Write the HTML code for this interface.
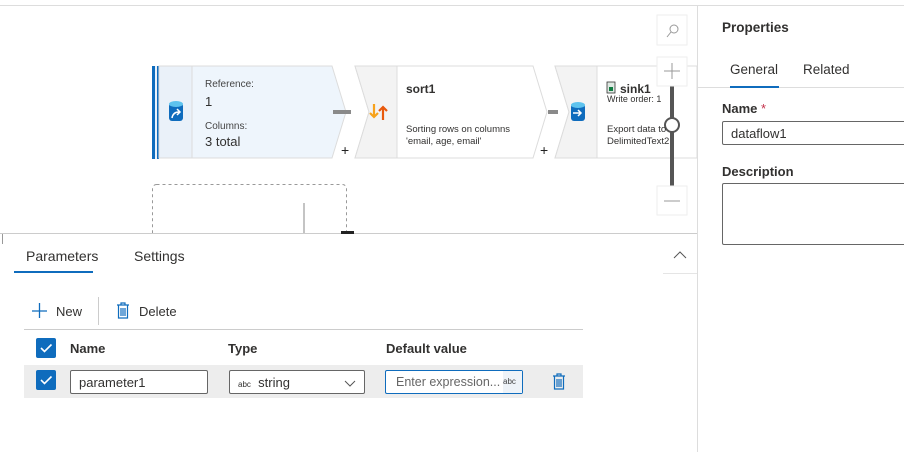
<!DOCTYPE html>
<html><head><meta charset="utf-8"><style>
*{box-sizing:border-box;margin:0;padding:0}
body{width:904px;height:452px;overflow:hidden;background:#fff;font-family:"Liberation Sans",sans-serif;color:#323130;position:relative}
.a{position:absolute}
.t{position:absolute;white-space:nowrap}
</style></head><body>
<div class="a" style="left:0;top:5px;width:904px;height:1px;background:#ddd"></div>
<svg class="a" style="left:0;top:0" width="697" height="234">
 <!-- node1 -->
 <rect x="152" y="66" width="3" height="93" fill="#0f6cbd"/>
 <rect x="155" y="66" width="2" height="93" fill="#eaf2fb"/>
 <rect x="157" y="66" width="2" height="93" fill="#0f6cbd"/>
 <polygon points="159,66 332,66 346,112 332,158 159,158" fill="#eef5fc" stroke="#dcdcdc"/>
 <rect x="159" y="66" width="33" height="92" fill="#eaf1f9" stroke="#dcdcdc"/>
 <rect x="169" y="103" width="14" height="18" rx="3" fill="#0f6cbd"/>
 <ellipse cx="176" cy="104" rx="7" ry="3" fill="#5ec3ee"/>
 <path d="M172 118 q1-6 7-6 M177 109 l3 3 -3 3" stroke="#fff" stroke-width="1.5" fill="none"/>
 <rect x="333" y="110" width="18" height="4" fill="#8a8a8a"/>
 <!-- node2 -->
 <polygon points="355,66 533,66 547,112 533,158 369,158 369,158 355,158 369,112" fill="#fff" stroke="#dcdcdc"/>
 <polygon points="355,66 397,66 397,158 369,158 355,158 369,112" fill="#f3f3f3" stroke="#dcdcdc"/>
 <path d="M374 104 v13 M370 113 l4 4 4-4" stroke="#f7a21b" stroke-width="2.2" fill="none"/>
 <path d="M383 120 v-13 M379 111 l4-4 4 4" stroke="#e8590c" stroke-width="2.2" fill="none"/>
 <rect x="548" y="110" width="10" height="4" fill="#8a8a8a"/>
 <!-- node3 -->
 <polygon points="555,66 697,66 697,158 569,158 555,158 569,112" fill="#fff" stroke="#dcdcdc"/>
 <polygon points="555,66 597,66 597,158 555,158 569,112" fill="#f3f3f3" stroke="#dcdcdc"/>
 <rect x="571" y="104" width="14" height="17" rx="3" fill="#0f6cbd"/>
 <ellipse cx="578" cy="105" rx="7" ry="3" fill="#5ec3ee"/>
 <path d="M573 113 h8 M578 110 l3 3-3 3" stroke="#fff" stroke-width="1.5" fill="none"/>
 <rect x="607" y="82" width="8" height="11" fill="#dfe9e3" stroke="#333" stroke-width="0.8"/>
 <rect x="609" y="87" width="4" height="4" fill="#107c41"/>
 <text x="341" y="155" font-size="14" fill="#222">+</text>
 <text x="540" y="155" font-size="14" fill="#222">+</text>
 <!-- dashed -->
 <rect x="152.5" y="184.5" width="194" height="60" rx="4" fill="none" stroke="#999" stroke-dasharray="3,3"/>
 <line x1="304" y1="203" x2="304" y2="234" stroke="#888"/>
 <!-- zoom -->
 <rect x="657" y="15" width="30" height="30" fill="#fff" stroke="#eee"/>
 <circle cx="674" cy="29" r="4" fill="none" stroke="#999"/><line x1="671" y1="32" x2="667" y2="37" stroke="#999"/>
 <line x1="672" y1="86" x2="672" y2="186" stroke="#555" stroke-width="4"/>
 <rect x="657" y="57" width="30" height="29" fill="#fff" stroke="#eee"/>
 <path d="M664 71 h16 M672 63 v16" stroke="#999"/>
 <circle cx="672" cy="125" r="7" fill="#fff" stroke="#555" stroke-width="2"/>
 <rect x="657" y="186" width="30" height="29" fill="#fff" stroke="#eee"/>
 <path d="M664 201 h16" stroke="#999"/>
</svg>
<div class="t" style="left:205px;top:79px;font-size:10px;color:#444">Reference:</div>
<div class="t" style="left:205px;top:94px;font-size:13px">1</div>
<div class="t" style="left:205px;top:121px;font-size:10px;color:#444">Columns:</div>
<div class="t" style="left:205px;top:134px;font-size:13px">3 total</div>
<div class="t" style="left:406px;top:82px;font-size:12px;font-weight:bold">sort1</div>
<div class="t" style="left:406px;top:124px;font-size:9.5px;line-height:12px">Sorting rows on columns<br>'email, age, email'</div>
<div class="t" style="left:620px;top:82px;font-size:12px;font-weight:bold">sink1</div>
<div class="t" style="left:607px;top:94px;font-size:9px">Write order: 1</div>
<div class="t" style="left:607px;top:124px;font-size:9.5px;line-height:12px;width:64px;overflow:hidden">Export data to<br>DelimitedText2</div>
<!-- bottom panel -->
<div class="a" style="left:0;top:233px;width:697px;height:1px;background:#ccc"></div>
<div class="a" style="left:341px;top:231px;width:13px;height:3px;background:#222"></div>
<div class="a" style="left:0;top:234px;width:697px;height:218px;background:#fff"></div>
<div class="a" style="left:2px;top:234px;width:1px;height:10px;background:#999"></div>
<div class="t" style="left:26px;top:248px;font-size:14px">Parameters</div>
<div class="t" style="left:134px;top:248px;font-size:14px">Settings</div>
<div class="a" style="left:14px;top:271px;width:79px;height:2px;background:#0f6cbd"></div>
<svg class="a" style="left:672px;top:250px" width="16" height="10"><path d="M2 8 l6-6 6 6" stroke="#555" fill="none"/></svg>
<div class="a" style="left:663px;top:273px;width:34px;height:1px;background:#e5e5e5"></div>
<svg class="a" style="left:32px;top:303px" width="16" height="16"><path d="M0 8 h15 M7.5 0 v15" stroke="#0f6cbd" stroke-width="1.3"/></svg>
<div class="t" style="left:56px;top:304px;font-size:13px">New</div>
<div class="a" style="left:98px;top:297px;width:1px;height:28px;background:#ccc"></div>
<svg class="a" style="left:116px;top:302px" width="14" height="17"><path d="M1 3 h12 M5 3 V1 h4 v2 M2.5 3 v13 h9 V3 M5 6 v8 M7 6 v8 M9 6 v8" stroke="#0f6cbd" fill="none" stroke-width="1.2"/></svg>
<div class="t" style="left:139px;top:304px;font-size:13px">Delete</div>
<div class="a" style="left:24px;top:329px;width:559px;height:1px;background:#ccc"></div>
<div class="a" style="left:36px;top:338px;width:20px;height:20px;background:#0f6cbd;border-radius:2px"></div>
<svg class="a" style="left:36px;top:338px" width="20" height="20"><path d="M5 10 l3.5 3.5 7-7" stroke="#fff" stroke-width="1.6" fill="none"/></svg>
<div class="t" style="left:70px;top:341px;font-size:13px;font-weight:bold">Name</div>
<div class="t" style="left:228px;top:341px;font-size:13px;font-weight:bold">Type</div>
<div class="t" style="left:386px;top:341px;font-size:13px;font-weight:bold">Default value</div>
<div class="a" style="left:24px;top:365px;width:559px;height:33px;background:#ededed"></div>
<div class="a" style="left:36px;top:370px;width:20px;height:20px;background:#0f6cbd;border-radius:2px"></div>
<svg class="a" style="left:36px;top:370px" width="20" height="20"><path d="M5 10 l3.5 3.5 7-7" stroke="#fff" stroke-width="1.6" fill="none"/></svg>
<div class="a" style="left:70px;top:370px;width:138px;height:24px;background:#fff;border:1px solid #666;border-radius:2px;font-size:13px;padding:4px 0 0 8px">parameter1</div>
<div class="a" style="left:229px;top:370px;width:136px;height:24px;background:#fff;border:1px solid #666;border-radius:2px;font-size:13px;padding:4px 0 0 8px"><span style="font-size:8px">abc</span>&nbsp; string</div>
<svg class="a" style="left:344px;top:380px" width="12" height="8"><path d="M1 1 l5 5 5-5" stroke="#555" fill="none"/></svg>
<div class="a" style="left:385px;top:370px;width:138px;height:24px;background:#fff;border:1px solid #0f6cbd;border-radius:2px;font-size:12.5px;padding:4px 0 0 10px;color:#666">Enter expression...</div>
<div class="a" style="left:503px;top:371px;width:19px;height:22px;background:#eef3f8;font-size:8px;padding-top:6px;color:#444">abc</div>
<svg class="a" style="left:552px;top:373px" width="14" height="18"><path d="M1 3 h12 M5 3 V1 h4 v2 M2.5 3 v13 h9 V3 M5 6 v8 M7 6 v8 M9 6 v8" stroke="#0f6cbd" fill="none" stroke-width="1.2"/></svg>
<!-- right panel -->
<div class="a" style="left:697px;top:5px;width:1px;height:447px;background:#ddd"></div>
<div class="t" style="left:722px;top:20px;font-size:13.5px;font-weight:bold">Properties</div>
<div class="t" style="left:730px;top:62px;font-size:13.5px">General</div>
<div class="t" style="left:803px;top:62px;font-size:13.5px">Related</div>
<div class="a" style="left:698px;top:87px;width:206px;height:1px;background:#ddd"></div>
<div class="a" style="left:730px;top:86px;width:49px;height:2px;background:#0f6cbd"></div>
<div class="t" style="left:722px;top:101px;font-size:13px;font-weight:bold">Name <span style="color:#c4314b;font-weight:normal">*</span></div>
<div class="a" style="left:722px;top:121px;width:190px;height:24px;border:1px solid #666;border-radius:2px;font-size:13px;padding:4px 0 0 8px">dataflow1</div>
<div class="t" style="left:722px;top:164px;font-size:13px;font-weight:bold">Description</div>
<div class="a" style="left:722px;top:183px;width:190px;height:62px;border:1px solid #666;border-radius:2px"></div>
</body></html>
